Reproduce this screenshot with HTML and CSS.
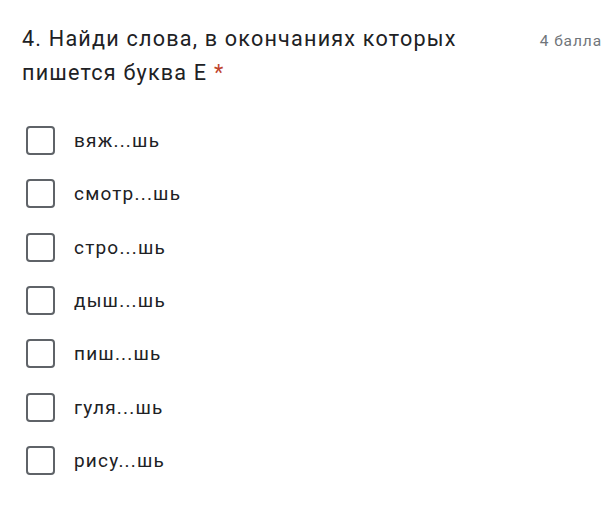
FILE: index.html
```html
<!DOCTYPE html>
<html lang="ru">
<head>
<meta charset="utf-8">
<link rel="stylesheet" href="styles.css">
</head>
<body>
<div class="question">
  <div class="header">
    <div class="title">4. Найди слова, в окончаниях которых пишется буква Е <span class="req">*</span></div>
    <div class="points">4 балла</div>
  </div>
  <div class="options">
    <label class="option"><span class="box"></span><span class="text">вяж...шь</span></label>
    <label class="option"><span class="box"></span><span class="text">смотр...шь</span></label>
    <label class="option"><span class="box"></span><span class="text">стро...шь</span></label>
    <label class="option"><span class="box"></span><span class="text">дыш...шь</span></label>
    <label class="option"><span class="box"></span><span class="text">пиш...шь</span></label>
    <label class="option"><span class="box"></span><span class="text">гуля...шь</span></label>
    <label class="option"><span class="box"></span><span class="text">рису...шь</span></label>
  </div>
</div>
</body>
</html>
```

FILE: styles.css
```css
html, body {
  margin: 0;
  padding: 0;
  background: #ffffff;
}
body {
  font-family: Roboto, "Noto Sans", Arial, sans-serif;
  color: #202124;
}
.question {
  padding: 22px 7px 0 22px;
}
.header {
  display: flex;
  align-items: baseline;
  justify-content: space-between;
}
.title {
  width: 490px;
  font-size: 21.6px;
  line-height: 34px;
  letter-spacing: 1.2px;
}
.req {
  color: #c0432c;
}
.points {
  font-size: 15.5px;
  letter-spacing: 0.9px;
  color: #70757a;
  white-space: nowrap;
}
.options {
  margin-top: 24px;
  display: flex;
  flex-direction: column;
  padding-left: 4px;
}
.option {
  height: 53.33px;
  display: flex;
  align-items: center;
  gap: 19px;
}
.box {
  box-sizing: border-box;
  width: 29px;
  height: 29px;
  border: 2.7px solid #5f6368;
  border-radius: 4px;
  flex: none;
}
.text {
  font-size: 19px;
  letter-spacing: 1.2px;
  color: #202124;
}
```
